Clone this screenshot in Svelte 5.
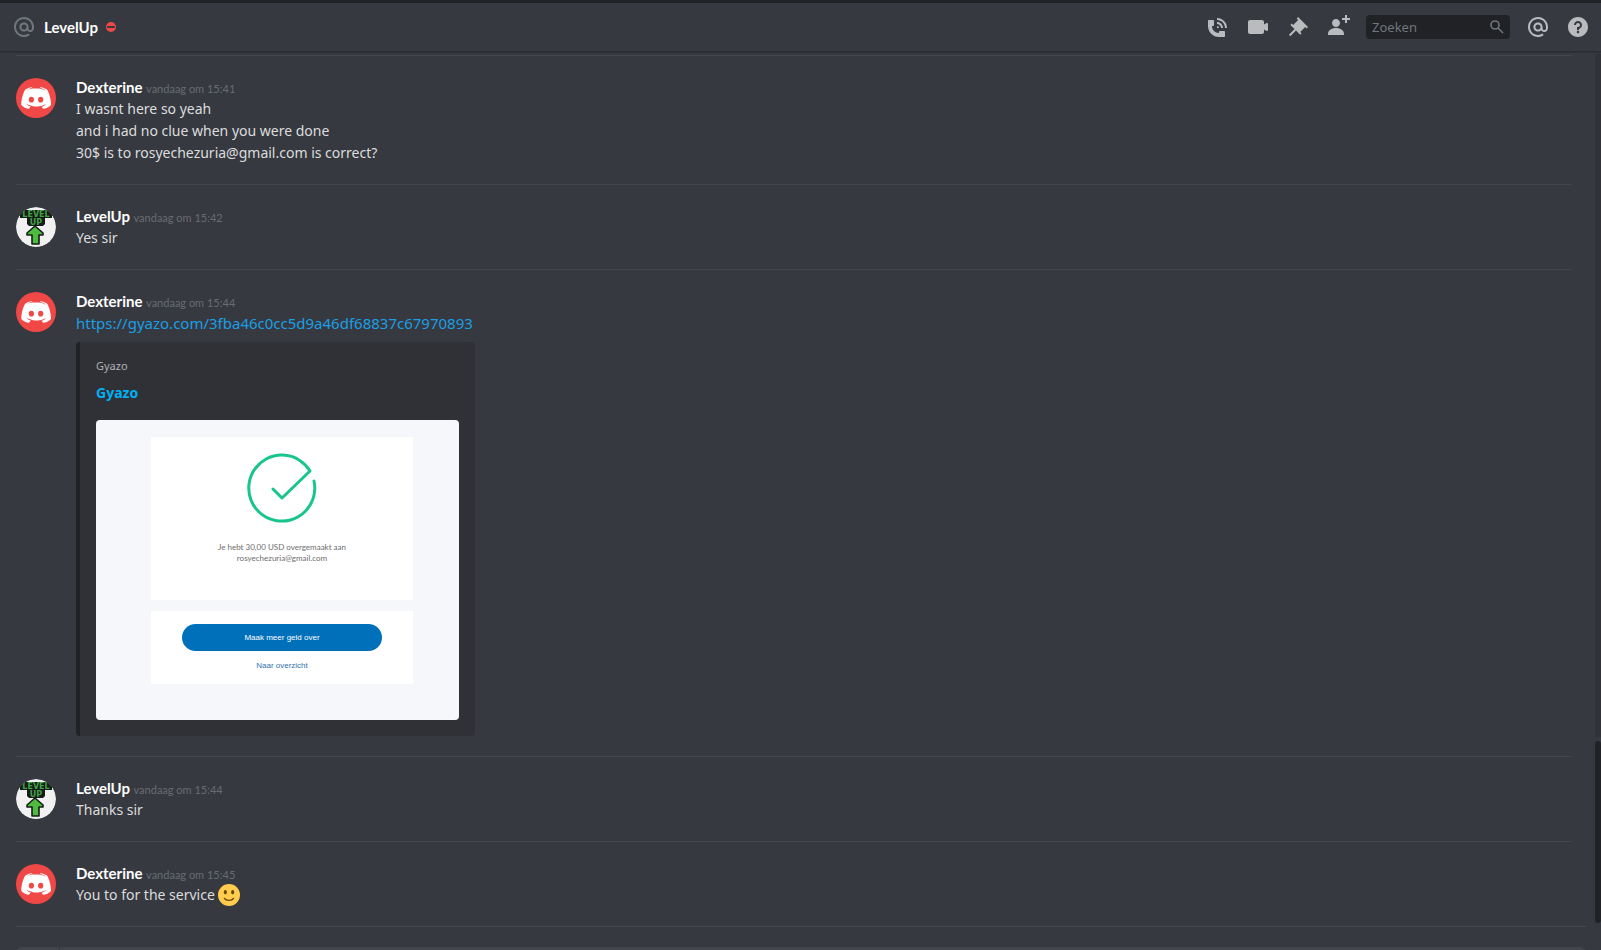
<script>
    const messages = [
        {
            author: "Dexterine",
            time: "vandaag om 15:41",
            lines: [
                "I wasnt here so yeah",
                "and i had no clue when you were done",
                "30$ is to rosyechezuria@gmail.com is correct?",
            ],
        },
        {
            author: "LevelUp",
            time: "vandaag om 15:42",
            lines: ["Yes sir"],
        },
        {
            author: "Dexterine",
            time: "vandaag om 15:44",
            lines: [],
            link: "https://gyazo.com/3fba46c0cc5d9a46df68837c67970893",
            embed: true,
        },
        {
            author: "LevelUp",
            time: "vandaag om 15:44",
            lines: ["Thanks sir"],
        },
        {
            author: "Dexterine",
            time: "vandaag om 15:45",
            lines: ["You to for the service"],
            smile: true,
        },
    ];

    const mentionPath =
        "M12 2C6.486 2 2 6.486 2 12C2 17.515 6.486 22 12 22C14.039 22 15.993 21.398 17.652 20.259L16.521 18.611C15.195 19.519 13.633 20 12 20C7.589 20 4 16.411 4 12C4 7.589 7.589 4 12 4C16.411 4 20 7.589 20 12V12.782C20 14.17 19.402 15 18.4 15L18.398 15.018C18.338 15.005 18.273 15 18.209 15H18C17.437 15 16.6 14.182 16.6 13.631V12C16.6 9.464 14.537 7.4 12 7.4C9.463 7.4 7.4 9.463 7.4 12C7.4 14.537 9.463 16.6 12 16.6C13.234 16.6 14.35 16.106 15.177 15.313C15.826 16.269 16.93 17 18 17L18.002 16.981C18.064 16.994 18.129 17 18.195 17H18.4C20.552 17 22 15.306 22 12.782V12C22 6.486 17.514 2 12 2ZM12 14.599C10.566 14.599 9.4 13.433 9.4 11.999C9.4 10.565 10.566 9.399 12 9.399C13.434 9.399 14.6 10.565 14.6 11.999C14.6 13.433 13.434 14.599 12 14.599Z";

    const actions = [
        {
            label: "Spraakoproep starten",
            path: "M11 5V3C16.515 3 21 7.486 21 13H19C19 8.589 15.411 5 11 5ZM17 13H15C15 10.795 13.206 9 11 9V7C14.309 7 17 9.691 17 13ZM11 11V13H13C13 11.896 12.105 11 11 11ZM14 16H18C18.553 16 19 16.447 19 17V21C19 21.553 18.553 22 18 22H13C6.925 22 2 17.075 2 11V6C2 5.447 2.448 5 3 5H7C7.553 5 8 5.447 8 6V10C8 10.553 7.553 11 7 11H6C6.063 14.938 9 18 13 18V17C13 16.447 13.447 16 14 16Z",
        },
        {
            label: "Videogesprek starten",
            path: "M21.526 8.149C21.231 7.966 20.862 7.951 20.553 8.105L18 9.382V7C18 5.897 17.103 5 16 5H4C2.897 5 2 5.897 2 7V17C2 18.104 2.897 19 4 19H16C17.103 19 18 18.104 18 17V14.618L20.553 15.894C20.694 15.965 20.847 16 21 16C21.183 16 21.365 15.949 21.526 15.851C21.82 15.668 22 15.347 22 15V9C22 8.653 21.82 8.332 21.526 8.149Z",
        },
        {
            label: "Vastgemaakte berichten",
            path: "M22 12L12.101 2.101L10.686 3.514L12.101 4.929L7.151 9.878V9.88L5.736 8.465L4.322 9.88L8.565 14.122L2.908 19.778L4.322 21.192L9.979 15.536L14.222 19.778L15.636 18.364L14.222 16.95L19.171 12H19.172L20.586 13.414L22 12Z",
        },
        {
            label: "Vrienden toevoegen",
            path: "M21 3H24V5H21V8H19V5H16V3H19V0H21V3ZM10 12C12.205 12 14 10.205 14 8C14 5.795 12.205 4 10 4C7.795 4 6 5.795 6 8C6 10.205 7.795 12 10 12ZM10 13C5.289 13 2 15.467 2 19V20H18V19C18 15.467 14.711 13 10 13Z",
        },
    ];

    const extras = [
        { label: "Vermeldingen", path: mentionPath },
        {
            label: "Help",
            path: "M12 2C6.486 2 2 6.487 2 12C2 17.515 6.486 22 12 22C17.514 22 22 17.515 22 12C22 6.487 17.514 2 12 2ZM12 18.25C11.31 18.25 10.75 17.691 10.75 17C10.75 16.31 11.31 15.75 12 15.75C12.69 15.75 13.25 16.31 13.25 17C13.25 17.691 12.69 18.25 12 18.25ZM13 13.875V15H11V12H12C13.104 12 14 11.103 14 10C14 8.896 13.104 8 12 8C10.896 8 10 8.896 10 10H8C8 7.795 9.795 6 12 6C14.205 6 16 7.795 16 10C16 11.861 14.723 13.429 13 13.875Z",
        },
    ];
</script>

{#snippet iconButton(item)}
    <button class="icon" type="button" aria-label={item.label}>
        <svg viewBox="0 0 24 24" width="24" height="24">
            <path fill="currentColor" d={item.path} />
        </svg>
    </button>
{/snippet}

{#snippet avatar(author)}
    {#if author === "LevelUp"}
        <svg class="avatar" viewBox="0 0 40 40">
            <circle cx="20" cy="20" r="20" fill="#f1f1f1" />
            <path fill="#161c18" d="M4 3H36V11H29V17L27 19H13L11 17V11H4Z" />
            <text x="20" y="10" class="pixel">LEVEL</text>
            <text x="20" y="18" class="pixel">UP</text>
            <path
                d="M19 19L27 26V28H23V37H16V28H11V26Z"
                fill="#4dbb3f"
                stroke="#161c18"
                stroke-width="1.6"
                stroke-linejoin="round"
            />
        </svg>
    {:else}
        <svg class="avatar" viewBox="44 30 157 157">
            <rect x="44" y="30" width="157" height="157" fill="#f04747" />
            <path
                fill="#fff"
                d="M150.900 150.600s-3.600-4.300-6.600-8.100c13.100-3.700 18.100-11.900 18.100-11.900-4.100 2.700-8 4.600-11.500 5.900-5 2.100-9.800 3.500-14.500 4.300-9.600 1.800-18.400 1.300-25.900-.1-5.700-1.100-10.600-2.700-14.700-4.300-2.300-.9-4.800-2-7.300-3.400-.3-.2-.6-.3-.9-.5-.2-.1-.3-.2-.4-.3-1.800-1-2.800-1.700-2.800-1.700s4.800 8 17.500 11.800c-3 3.800-6.700 8.300-6.700 8.300-22.100-.7-30.500-15.200-30.500-15.200 0-32.200 14.400-58.300 14.400-58.300 14.400-10.800 28.100-10.500 28.100-10.500l1 1.200c-18 5.200-26.300 13.100-26.300 13.100s2.200-1.200 5.900-2.900c10.700-4.700 19.200-6 22.700-6.300.6-.1 1.100-.2 1.700-.2 6.100-.8 13-1 20.200-.2 9.500 1.100 19.700 3.900 30.100 9.600 0 0-7.900-7.500-24.900-12.700l1.400-1.600s13.700-.3 28.100 10.500c0 0 14.400 26.100 14.400 58.300 0 0-8.500 14.500-30.600 15.200z"
            />
            <ellipse cx="104.400" cy="115" rx="10.200" ry="11.100" fill="#f04747" />
            <ellipse cx="140.900" cy="115" rx="10.200" ry="11.100" fill="#f04747" />
        </svg>
    {/if}
{/snippet}

<div class="app">
    <header>
        <svg class="at" viewBox="0 0 24 24" width="24" height="24">
            <path fill="currentColor" d={mentionPath} />
        </svg>
        <h1>LevelUp</h1>
        <svg class="status" viewBox="0 0 10 10" width="10" height="10">
            <circle cx="5" cy="5" r="5" fill="#f04747" />
            <rect x="1" y="4" width="8" height="2" rx="1" fill="#36393f" />
        </svg>

        <div class="toolbar">
            {#each actions as item}
                {@render iconButton(item)}
            {/each}
            <label class="search">
                <input type="text" placeholder="Zoeken" aria-label="Zoeken" />
                <svg viewBox="0 0 16 16" width="16" height="16">
                    <circle cx="7" cy="6" r="4" />
                    <path d="M10 9L15 14" />
                </svg>
            </label>
            {#each extras as item}
                {@render iconButton(item)}
            {/each}
        </div>
    </header>

    <div class="scroller">
        <main>
            {#each messages as message}
                <article>
                    {@render avatar(message.author)}
                    <div class="content">
                        <h2>
                            {message.author}
                            <time>{message.time}</time>
                        </h2>
                        {#each message.lines as line}
                            <p>
                                {line}
                                {#if message.smile}
                                    <svg class="emoji" viewBox="0 0 36 36" role="img" aria-label="smile">
                                        <circle cx="18" cy="18" r="18" fill="#ffcc4d" />
                                        <ellipse cx="12" cy="13.500" rx="2.500" ry="3.500" fill="#664500" />
                                        <ellipse cx="24" cy="13.500" rx="2.500" ry="3.500" fill="#664500" />
                                        <path
                                            d="M10.500 23.500C13 28 23 28 25.500 23.500"
                                            fill="none"
                                            stroke="#664500"
                                            stroke-width="2.200"
                                            stroke-linecap="round"
                                        />
                                    </svg>
                                {/if}
                            </p>
                        {/each}
                        {#if message.link}
                            <p class="link"><a href={message.link}>{message.link}</a></p>
                        {/if}
                        {#if message.embed}
                            <div class="embed">
                                <div class="provider">Gyazo</div>
                                <a class="embed-title" href={message.link}>Gyazo</a>
                                <div class="preview">
                                    <div class="card receipt">
                                        <svg viewBox="0 0 69 69" width="69" height="69">
                                            <path d="M66 27A33 33 0 1 1 62 17L34 44L25 35" />
                                        </svg>
                                        <span>Je hebt 30,00 USD overgemaakt aan</span>
                                        <span>rosyechezuria@gmail.com</span>
                                    </div>
                                    <div class="card choices">
                                        <button type="button">Maak meer geld over</button>
                                        <a href="#overzicht">Naar overzicht</a>
                                    </div>
                                </div>
                            </div>
                        {/if}
                    </div>
                </article>
            {/each}
        </main>
        <div class="scrollbar">
            <div class="track"></div>
            <div class="thumb"></div>
        </div>
    </div>

    <form>
        <div class="composer">
            <button type="button" aria-label="Bestand uploaden"></button>
            <input type="text" aria-label="Bericht" />
        </div>
    </form>
</div>

<style>
    :global(body) {
        margin: 0;
        background: #36393f;
    }

    .app {
        display: flex;
        flex-direction: column;
        height: 100vh;
        overflow: hidden;
        box-sizing: border-box;
        border-top: 3px solid #202225;
        background: #36393f;
        color: #dcddde;
        font-family: "Noto Sans", "Open Sans", sans-serif;
        font-size: 14px;
        line-height: 22px;
    }

    button,
    input {
        font: inherit;
        border: none;
        padding: 0;
        background: none;
    }
    button {
        cursor: pointer;
    }
    a {
        color: #1a9fe6;
        text-decoration: none;
    }
    a:hover {
        text-decoration: underline;
    }
    h1,
    h2,
    p {
        margin: 0;
    }
    h1,
    h2 {
        color: white;
        font-family: Lato, "Noto Sans", sans-serif;
        font-size: 15px;
        font-weight: bold;
    }

    header {
        display: flex;
        flex-shrink: 0;
        align-items: center;
        height: 48px;
        padding: 0 11px 0 12px;
        border-bottom: 1px solid #2a2c31;
        box-shadow: 0 1px 1px rgba(0, 0, 0, 0.1);
    }
    .at {
        color: #72767d;
        margin-right: 8px;
    }
    .status {
        margin-left: 8px;
    }
    .toolbar {
        display: flex;
        align-items: center;
        gap: 16px;
        margin-left: auto;
    }
    .icon {
        display: flex;
        color: #b9bbbe;
    }
    .icon:hover {
        color: #dcddde;
    }
    .search {
        display: flex;
        align-items: center;
        box-sizing: border-box;
        width: 144px;
        height: 24px;
        padding: 0 6px;
        border-radius: 4px;
        background: #202225;
    }
    .search input {
        flex: 1;
        min-width: 0;
        color: #dcddde;
        font-size: 13px;
        outline: none;
    }
    .search input::placeholder {
        color: #72767d;
        opacity: 1;
    }
    .search svg {
        fill: none;
        stroke: #72767d;
        stroke-width: 1.6;
    }

    .scroller {
        display: flex;
        flex-shrink: 0;
    }
    main {
        flex: 1;
        min-width: 0;
        padding: 3px 23px 0 16px;
    }
    article {
        display: flex;
        gap: 20px;
        padding: 20px 0;
        border-top: 1px solid #424549;
    }
    .avatar {
        flex-shrink: 0;
        width: 40px;
        height: 40px;
        margin-top: 2px;
        border-radius: 50%;
    }
    .pixel {
        font-family: "DejaVu Sans", sans-serif;
        font-size: 8px;
        font-weight: bold;
        text-anchor: middle;
        fill: #43a047;
    }
    .content {
        min-width: 0;
    }
    time {
        color: #686c73;
        font-size: 11px;
        font-weight: normal;
        line-height: 16px;
    }
    .link {
        font-size: 15px;
    }
    .emoji {
        width: 22px;
        height: 22px;
        vertical-align: bottom;
    }

    .embed {
        width: fit-content;
        margin-top: 8px;
        padding: 16px;
        border-left: 4px solid #202225;
        border-radius: 4px;
        background: #2f3136;
    }
    .provider {
        color: #b0b2b5;
        font-size: 11px;
        line-height: 16px;
    }
    .embed-title {
        display: block;
        margin: 8px 0 16px;
        color: #00b0f4;
        font-weight: bold;
    }
    .preview {
        display: flex;
        flex-direction: column;
        gap: 11px;
        padding: 17px 46px 36px 55px;
        border-radius: 4px;
        background: #f5f7fa;
        font-size: 8px;
        line-height: 11px;
    }
    .card {
        display: flex;
        flex-direction: column;
        align-items: center;
        background: white;
    }
    .receipt {
        padding: 17px 0 36px;
        color: #6c6c6c;
        font-family: Lato, sans-serif;
    }
    .receipt svg {
        margin-bottom: 19px;
        overflow: visible;
        fill: none;
        stroke: #18c68c;
        stroke-width: 3;
        stroke-linecap: round;
        stroke-linejoin: round;
    }
    .choices {
        gap: 9px;
        padding: 13px 31px 12px;
        font-family: "Liberation Sans", Arial, sans-serif;
    }
    .choices button {
        width: 200px;
        height: 27px;
        border-radius: 14px;
        background: #0070ba;
        color: white;
    }
    .choices a {
        color: #2f74ad;
        line-height: 12px;
    }

    .scrollbar {
        display: flex;
        flex-direction: column;
        gap: 4px;
        width: 6px;
        padding: 2px 0 3px;
    }
    .track {
        flex: 79;
        border-radius: 4px 0 0 0;
        background: #303237;
    }
    .thumb {
        flex: 21;
        border-radius: 4px;
        background: #202225;
    }

    form {
        flex-shrink: 0;
        margin: 0 15px 0 16px;
        padding: 20px 0 24px;
        border-top: 1px solid #46494d;
    }
    .composer {
        display: flex;
        height: 44px;
        border-radius: 6px;
        background: #42454b;
    }
    .composer button {
        width: 44px;
        border-right: 1px solid #36393f;
    }
    .composer input {
        flex: 1;
        color: #dcddde;
        outline: none;
    }
</style>
